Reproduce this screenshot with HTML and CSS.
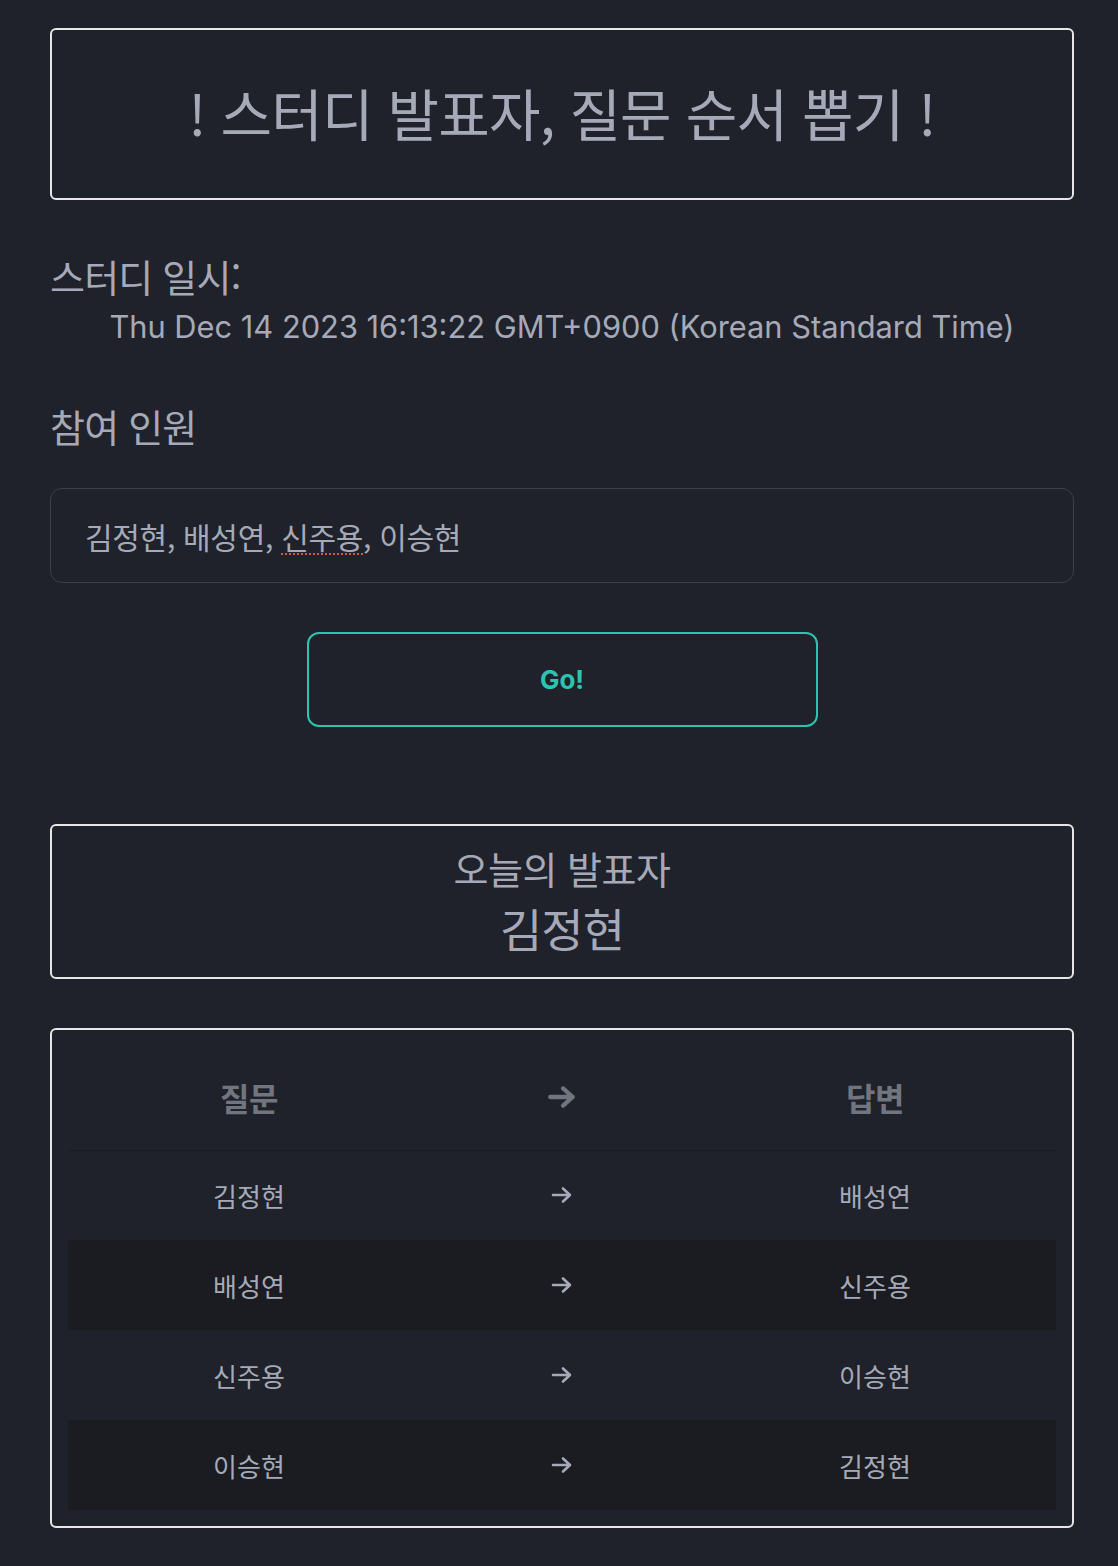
FILE: index.html
```html
<!DOCTYPE html>
<html lang="ko">
<head>
<meta charset="utf-8">
<title>스터디 발표자, 질문 순서 뽑기</title>
<link rel="stylesheet" href="styles.css">
</head>
<body>
<main class="page">
  <header class="title-box">
    <h1 class="title">! 스터디 발표자, 질문 순서 뽑기 !</h1>
  </header>

  <section class="date-section">
    <h2 class="label">스터디 일시:</h2>
    <p class="date">Thu Dec 14 2023 16:13:22 GMT+0900 (Korean Standard Time)</p>
  </section>

  <section class="members-section">
    <h2 class="label">참여 인원</h2>
    <div class="input">김정현, 배성연,&nbsp;<span class="misspelled">신주용</span>, 이승현</div>
    <div class="button-row">
      <button class="go-button" type="button">Go!</button>
    </div>
  </section>

  <section class="presenter-box">
    <p class="presenter-label">오늘의 발표자</p>
    <p class="presenter-name">김정현</p>
  </section>

  <section class="table-box">
    <table class="order-table">
      <thead>
        <tr>
          <th class="col-side">질문</th>
          <th class="col-mid"><svg class="arrow arrow-lg" viewBox="0 0 28 24" aria-label="→"><path d="M3 12H24M15 4L24 12L15 20"/></svg></th>
          <th class="col-side">답변</th>
        </tr>
      </thead>
      <tbody>
        <tr><td>김정현</td><td><svg class="arrow" viewBox="0 0 24 20" aria-label="→"><path d="M3 10H20M13 3.5L20 10L13 16.5"/></svg></td><td>배성연</td></tr>
        <tr class="striped"><td>배성연</td><td><svg class="arrow" viewBox="0 0 24 20" aria-label="→"><path d="M3 10H20M13 3.5L20 10L13 16.5"/></svg></td><td>신주용</td></tr>
        <tr><td>신주용</td><td><svg class="arrow" viewBox="0 0 24 20" aria-label="→"><path d="M3 10H20M13 3.5L20 10L13 16.5"/></svg></td><td>이승현</td></tr>
        <tr class="striped"><td>이승현</td><td><svg class="arrow" viewBox="0 0 24 20" aria-label="→"><path d="M3 10H20M13 3.5L20 10L13 16.5"/></svg></td><td>김정현</td></tr>
      </tbody>
    </table>
  </section>
</main>
</body>
</html>
```

FILE: styles.css
```css
* { box-sizing: border-box; }

html, body {
  margin: 0;
  padding: 0;
  background: #1f222a;
}

body {
  font-family: Inter, "Noto Sans CJK KR", sans-serif;
  color: #a6aab8;
}

.page {
  width: 1024px;
  padding: 28px 0 39px;
  margin-left: 50px;
}

.title-box {
  border: 2px solid #e6e6e6;
  border-radius: 6px;
  height: 172px;
  display: flex;
  align-items: center;
  justify-content: center;
}

.title {
  margin: 0;
  font-family: "Noto Sans CJK KR", sans-serif;
  font-weight: 400;
  font-size: 56px;
  letter-spacing: -0.8px;
  color: #a6aab8;
  padding-bottom: 6px;
}

.date-section {
  margin-top: 50px;
}

.label {
  margin: 0;
  font-family: "Noto Sans CJK KR", sans-serif;
  font-weight: 400;
  font-size: 38px;
  line-height: 52px;
  letter-spacing: -0.8px;
  color: #a6aab8;
}

.date {
  margin: 0;
  text-align: center;
  font-family: Inter, sans-serif;
  font-size: 30.8px;
  line-height: 50px;
  color: #a6aab8;
}

.members-section {
  margin-top: 48px;
}

.input {
  margin-top: 36px;
  height: 95px;
  border: 1px solid #3b3f48;
  border-radius: 12px;
  padding: 0 34px;
  display: flex;
  align-items: center;
  white-space: pre;
  font-family: "Noto Sans CJK KR", sans-serif;
  font-size: 30px;
  letter-spacing: -0.3px;
  color: #a6aab8;
}

.misspelled {
  text-decoration: underline dotted #d9534f;
  text-decoration-thickness: 2px;
  text-underline-offset: 5px;
}

.button-row {
  display: flex;
  justify-content: center;
  margin-top: 49px;
}

.go-button {
  width: 511px;
  height: 95px;
  background: transparent;
  border: 2px solid #2cc4b0;
  border-radius: 12px;
  color: #2cc4b0;
  font-family: Inter, sans-serif;
  font-weight: 700;
  font-size: 26px;
  cursor: pointer;
}

.presenter-box {
  margin-top: 97px;
  border: 2px solid #e6e6e6;
  border-radius: 6px;
  height: 155px;
  display: flex;
  flex-direction: column;
  align-items: center;
  justify-content: center;
  padding-bottom: 6px;
  font-family: "Noto Sans CJK KR", sans-serif;
}

.presenter-label {
  margin: 0;
  font-size: 38px;
  line-height: 56px;
  letter-spacing: -0.5px;
}

.presenter-name {
  margin: 0;
  font-size: 46px;
  line-height: 62px;
  letter-spacing: -1px;
}

.table-box {
  margin-top: 49px;
  border: 2px solid #e6e6e6;
  border-radius: 6px;
  padding: 16px;
}

.order-table {
  width: 100%;
  border-collapse: collapse;
  font-family: "Noto Sans CJK KR", sans-serif;
}

.order-table th {
  height: 104px;
  font-size: 32px;
  font-weight: 700;
  color: #71757f;
  border-bottom: 1px solid #191b20;
  text-align: center;
  letter-spacing: -0.5px;
  vertical-align: middle;
  padding-bottom: 3px;
}

.col-side { width: 362px; }
.col-mid { width: 264px; }

.order-table td {
  height: 90px;
  font-size: 26px;
  text-align: center;
  color: #a6aab8;
  vertical-align: middle;
}

.order-table tr.striped td {
  background: #1a1c21;
}

.arrow {
  display: block;
  margin: 0 auto;
  width: 24px;
  height: 20px;
  fill: none;
  stroke: #a6aab8;
  stroke-width: 2.6;
  stroke-linecap: round;
  stroke-linejoin: round;
}

.arrow-lg {
  width: 30px;
  height: 26px;
  stroke: #71757f;
  stroke-width: 4;
}
```
